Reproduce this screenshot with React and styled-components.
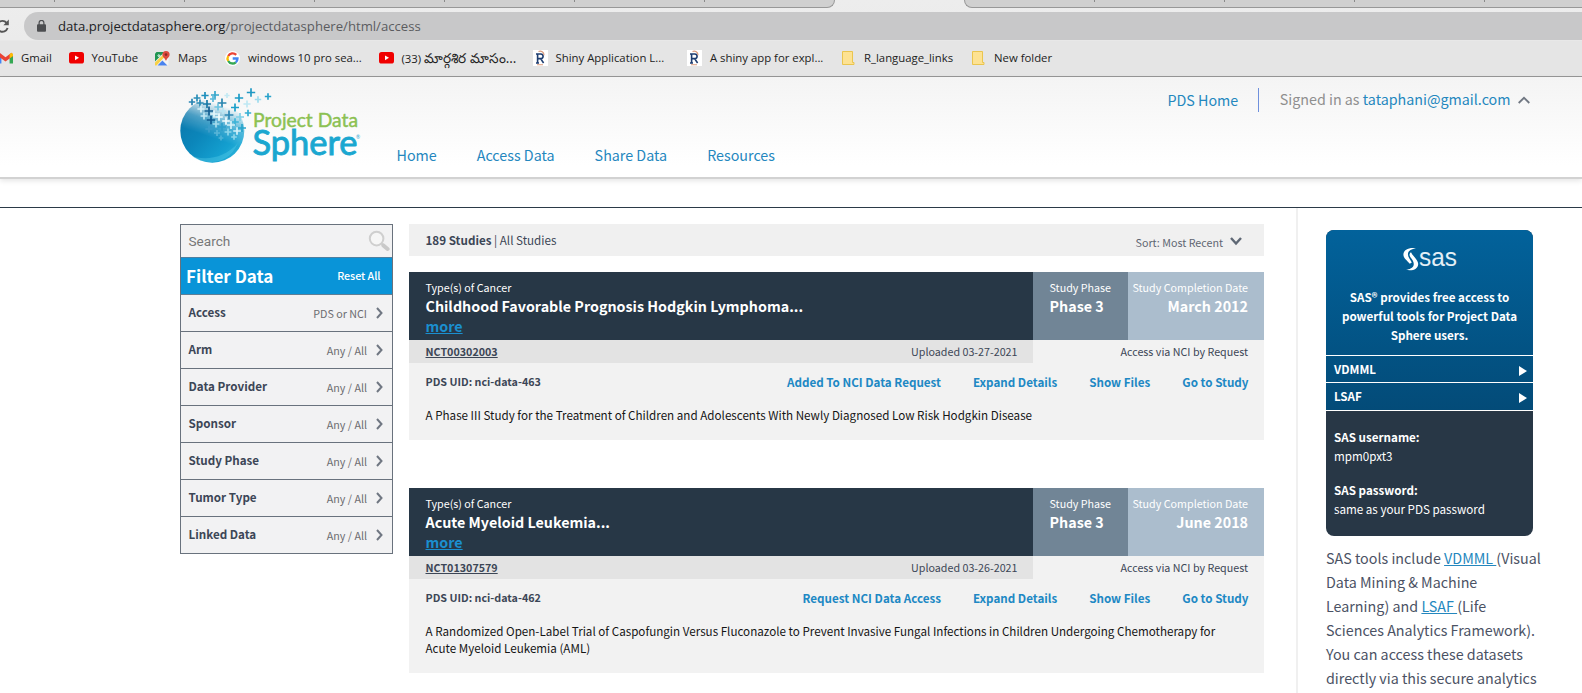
import React from 'react';
import styled, { createGlobalStyle } from 'styled-components';

const GlobalStyle = createGlobalStyle`
  *, *::before, *::after { box-sizing: border-box; }
  html, body { margin: 0; padding: 0; overflow: hidden; background: #fff; }
  a { color: inherit; text-decoration: none; }
  p { margin: 0; }
`;

const siteFont = '"Noto Sans CJK SC", "Noto Sans", sans-serif';
const chromeFont = '"Open Sans", "Noto Sans", sans-serif';

/* type scale: small, body, large, heading */
const size = { s: '10.72px', m: '11.63px', l: '14.3px', xl: '17.07px' };

const Window = styled.div`
  width: 100vw;
  height: 693px;
  overflow: hidden;
  display: flex;
  flex-direction: column;
  font-family: ${siteFont};
  font-size: ${size.m};
  line-height: 16px;
  color: #3c4656;
`;

/* ---------- browser chrome ---------- */
const Browser = styled.div`
  flex: none;
  height: 77px;
  display: flex;
  flex-direction: column;
  font-family: ${chromeFont};
  background: linear-gradient(#ededed 0, #ebebeb 40px, #e5e5e5 41px, #e5e5e5 100%);
  border-bottom: 1px solid #979797;
`;

const TabStrip = styled.div`
  display: flex;
  justify-content: space-between;
  height: 8px;
`;

const TabGroup = styled.div`
  display: flex;
  width: ${p => p.$width}px;
  padding-left: ${p => p.$inset}px;
  background: #d0d0d0;
  border-bottom: 1px solid #989898;
  border-radius: ${p => (p.$end ? '0 0 0 8px' : '0 0 8px 0')};
  ${p => (p.$end ? 'border-left: 1px solid #989898;' : 'border-right: 1px solid #989898;')}
`;

const TabMark = styled.div`
  flex: none;
  width: ${p => p.$width}px;
  height: 2px;
  border-left: 1px solid #8a8a8a;
`;

const AddressRow = styled.div`
  display: flex;
  height: 32px;
  padding-top: 4px;
`;

const ReloadSlot = styled.div`
  width: 24px;
  padding-top: 6px;
`;

const Address = styled.div`
  flex: 1;
  display: flex;
  align-items: center;
  height: 28px;
  padding-left: 13px;
  border-radius: 14px 0 0 14px;
  background: #c8c8c9;
  font-size: 13.15px;
  line-height: 28px;
  color: #5b5c5f;
`;

const Host = styled.span`
  margin-left: 12px;
  color: #202124;
`;

const Bookmarks = styled.div`
  flex: 1;
  display: flex;
  align-items: center;
  margin-left: -2px;
`;

const Bookmark = styled.a`
  flex: 0 0 ${p => p.$width}px;
  display: flex;
  align-items: center;
  gap: 8px;
  font-size: 11.35px;
  line-height: 16px;
  white-space: nowrap;
  color: #222;
`;

const Telugu = styled.span`
  font-size: 13.6px;
`;

/* ---------- site header ---------- */
const Header = styled.header`
  position: relative;
  flex: none;
  display: flex;
  align-items: flex-start;
  height: 102px;
  padding-left: 180px;
  background: linear-gradient(#f4f4f4, #fff 88%);
  border-bottom: 2px solid #d2d2d2;
  box-shadow: 0 2px 5px rgba(0, 0, 0, 0.1);
`;

const Nav = styled.nav`
  display: flex;
  gap: 40px;
  margin: 68px 0 0 35.5px;
  font-size: ${size.l};
  line-height: 20px;
  color: #2487be;
`;

const Account = styled.div`
  display: flex;
  align-items: center;
  margin: 11px 52px 0 auto;
  height: 24px;
  font-size: ${size.l};
  line-height: 20px;
  color: #2487be;
`;

const HomeLink = styled.a`
  height: 24px;
  padding-right: 20px;
  line-height: 23px;
  border-right: 1px solid #6f90dd;
`;

const SignedIn = styled.span`
  margin: 0 7.5px 0 20.5px;
  padding-bottom: 3px;
  color: #8f8f8f;
`;

const Mail = styled.a`
  color: #2487be;
`;

const SubBar = styled.div`
  flex: none;
  height: 29px;
  border-bottom: 1px solid #2b3a47;
`;

/* ---------- body ---------- */
const Body = styled.main`
  flex: 1;
  display: flex;
  min-height: 0;
  padding-left: 180px;
`;

const Filters = styled.aside`
  align-self: flex-start;
  width: 213px;
  margin: 16px 16px 0 0;
  border: 1px solid #69727d;
  background: #f2f2f3;
`;

const SearchBox = styled.div`
  display: flex;
  justify-content: space-between;
  height: 32px;
  padding: 5px 2px 0 7.5px;
  font: 13.6px/22px Roboto, sans-serif;
  color: #777;
`;

const FilterHead = styled.div`
  display: flex;
  align-items: center;
  justify-content: space-between;
  height: 38px;
  padding: 0 11.5px 2px 5px;
  background: #0994d8;
  border-top: 1px solid #4f7fa0;
  border-bottom: 1px solid #5f7f96;
  color: #fff;
`;

const FilterTitle = styled.h2`
  margin: 0;
  font-size: ${size.xl};
  line-height: 25px;
`;

const Reset = styled.a`
  font-size: ${size.s};
  font-weight: 500;
  line-height: 15px;
  letter-spacing: -0.05px;
`;

const FilterRow = styled.div`
  display: flex;
  align-items: center;
  height: 37px;
  padding: 0 9px 0 7.5px;
  border-bottom: 1px solid #69727d;
  &:last-child { height: 36px; border-bottom: 0; }
`;

const FilterName = styled.b`
  flex: 1;
  padding-bottom: 3px;
`;

const FilterValue = styled.span`
  margin-right: 9px;
  padding-top: 1px;
  font-size: ${size.s};
  color: #6c6c70;
`;

const Results = styled.section`
  width: 855px;
  padding-top: 16px;
`;

const Summary = styled.div`
  display: flex;
  justify-content: space-between;
  height: 32px;
  margin-bottom: 16px;
  padding: 8px 22px 0 16.5px;
  background: #f0f0f0;
`;

const Sort = styled.span`
  display: flex;
  gap: 7px;
  padding-top: 3px;
  font-size: ${size.s};
  line-height: 15px;
  color: #5f6672;
`;

const Card = styled.article`
  margin-bottom: 48px;
  background: #f2f2f2;
`;

const CardHead = styled.div`
  display: grid;
  grid-template-columns: 624px 95px 136px;
  height: 68px;
  color: #fff;
`;

const HeadCell = styled.div`
  padding: 8px 16px 0 ${p => (p.$right ? 4 : 16.5)}px;
  background: ${p => p.$bg};
  text-align: ${p => (p.$right ? 'right' : 'left')};
  white-space: nowrap;
`;

const Label = styled.div`
  margin-bottom: 1px;
  font-size: ${size.s};
  line-height: 15px;
`;

const Value = styled.div`
  font-size: ${size.l};
  font-weight: 700;
  line-height: 20px;
`;

const More = styled.a`
  color: #1b8fcf;
  text-decoration: underline;
`;

const MetaRow = styled.div`
  display: grid;
  grid-template-columns: 624px 1fr;
  height: 23px;
  font-size: ${size.s};
  line-height: 15px;
`;

const MetaLeft = styled.div`
  display: flex;
  justify-content: space-between;
  padding: 4px 15.5px 0 16.5px;
  background: #e3e3e3;
`;

const MetaRight = styled.div`
  padding: 4px 16px 0;
  text-align: right;
`;

const Trial = styled.a`
  font-weight: 700;
  text-decoration: underline;
`;

const ActionRow = styled.div`
  display: flex;
  gap: 32px;
  padding: 11px 15.5px 0 16.5px;
  font-weight: 700;
  color: #2088c4;
`;

const Uid = styled.span`
  flex: 1;
  font-size: ${size.s};
  color: #3c4656;
`;

const Description = styled.p`
  padding: 17px 40px 16px 16.5px;
  line-height: 17px;
  color: #151515;
`;

const Side = styled.aside`
  flex: 1;
  margin-left: 32px;
  padding: 22px 34px 0 28px;
  border-left: 2px solid #f0f0f0;
`;

const SasPanel = styled.div`
  width: 207px;
  height: 306px;
  overflow: hidden;
  border-radius: 8px;
  background: #283746;
  color: #fff;
`;

const SasTop = styled.div`
  height: 181px;
  background: linear-gradient(#02629b, #034b78);
  font-weight: 700;
`;

const SasIntro = styled.div`
  display: flex;
  flex-direction: column;
  align-items: center;
  height: 125px;
  padding-top: 10px;
`;

const SasText = styled.p`
  margin-top: 11px;
  padding: 0 10px;
  text-align: center;
  line-height: 19px;
`;

const SasLink = styled.a`
  display: flex;
  justify-content: space-between;
  align-items: center;
  height: ${p => p.$height}px;
  padding: 0 6px 0 8px;
  border-top: 1px solid #fff;
  ${p => p.$last && 'padding-bottom: 1px; border-bottom: 1px solid #fff;'}
`;

const Credentials = styled.dl`
  margin: 0;
  padding: 17px 8px 0;
  line-height: 19px;
`;

const Term = styled.dt`
  font-weight: 700;
`;

const Detail = styled.dd`
  margin: 0 0 15px;
`;

const SideText = styled.p`
  width: 220px;
  margin-top: 10px;
  font-size: ${size.l};
  line-height: 24px;
  color: #4b5264;
  white-space: nowrap;
`;

const TextLink = styled.a`
  color: #2487be;
  text-decoration: underline;
  white-space: pre;
`;

/* ---------- drawings ---------- */
const Icon = styled.svg`
  flex: none;
  display: block;
`;

const LogoSlot = styled.a`
  margin-top: 9px;
`;

const ArrowSlot = styled.span`
  padding-top: 3px;
`;

const Reload = () => (
  <Icon width="12" height="16" viewBox="0 0 12 16">
    <path d="M6.6 4.8A5.4 5.4 0 1 0 7.6 10" fill="none" stroke="#555" strokeWidth="1.9" />
    <path d="M8.8 1.6v5.6H3.4z" fill="#555" />
  </Icon>
);

const Lock = () => (
  <Icon width="9" height="12" viewBox="0 0 9 12">
    <rect x="0" y="4.2" width="9" height="7.6" rx="1" fill="#4c4d50" />
    <path d="M2.1 5V2.8a2.4 2.4 0 0 1 4.8 0V5" fill="none" stroke="#4c4d50" strokeWidth="1.2" />
  </Icon>
);

const GmailIcon = () => (
  <Icon width="15" height="12" viewBox="0 0 15 12">
    <path d="M0 2v9.5h3.4V5z" fill="#4285f4" />
    <path d="M15 2v9.5h-3.4V5z" fill="#34a853" />
    <path d="M0 2.5 1.5.7 7.5 5.3 13.5.7 15 2.5v1.4L7.5 9.5 0 3.9z" fill="#ea4335" />
    <path d="M11.6 2.2 13.4.7 15 2v2l-3.4 2.5z" fill="#fbbc04" />
  </Icon>
);

const YouTubeIcon = () => (
  <Icon width="15" height="12" viewBox="0 0 15 12">
    <rect width="15" height="11.6" rx="2.6" fill="#f00000" />
    <path d="M6 3.4v4.8l4-2.4z" fill="#fff" />
  </Icon>
);

const MapsIcon = () => (
  <Icon width="15" height="15" viewBox="0 0 15 15">
    <rect x="0" y="1" width="13.5" height="13.5" rx="1.5" fill="#f3f3f3" />
    <path d="M0 2.5 1.5 1h8L0 10.5z" fill="#219653" />
    <path d="M0 11.500 9.400 2.500l1.800 1.800L1.500 14.500H0z" fill="#f7d046" />
    <path d="M2.500 14.500 7.400 9.400l5 5.100z" fill="#4a83ee" />
    <path d="M11 0a3.6 3.6 0 0 1 3.6 3.7c0 2.4-2.6 3.3-3.6 6.3-1-3-3.6-3.9-3.6-6.3A3.6 3.6 0 0 1 11 0z" fill="#dd4b3e" />
    <circle cx="11" cy="3.6" r="1.3" fill="#8c2b22" />
    <path d="M5.500 4.400H3.800v.9h.8a1 1 0 1 1-.2-1.500" fill="none" stroke="#fff" strokeWidth=".7" />
  </Icon>
);

const GoogleIcon = () => (
  <Icon width="15" height="15" viewBox="0 0 15 15">
    <circle cx="7.5" cy="7.5" r="7.5" fill="#fff" />
    <g fill="none" strokeWidth="2.3">
      <path d="M11.2 3.9A5 5 0 0 0 3.2 5" stroke="#ea4335" />
      <path d="M3.2 5a5 5 0 0 0 0 5" stroke="#fbbc05" />
      <path d="M3.2 10a5 5 0 0 0 7.6 1.3" stroke="#34a853" />
      <path d="M10.8 11.3A5 5 0 0 0 12.5 7.5H7.7" stroke="#4285f4" />
    </g>
  </Icon>
);

const RIcon = () => (
  <Icon width="15" height="16" viewBox="0 0 15 16">
    <rect width="15" height="16" fill="#fff" />
    <path d="M4.6 13V4h3.2a2.3 2.3 0 0 1 0 4.6H4.6M7.6 8.6 10.6 13M3 13h3M3 4h2" fill="none" stroke="#1d3d70" strokeWidth="1.6" />
    <path d="M5.5 1.6A3.8 3.8 0 0 1 11 5.2M4 14.8h6" fill="none" stroke="#d99a7c" strokeWidth="1.1" />
  </Icon>
);

const FolderIcon = () => (
  <Icon width="15" height="14" viewBox="0 0 15 14">
    <path d="M1.5.5h10v11h1.5v2H1.5z" fill="#fde293" stroke="#eac54f" />
  </Icon>
);

const Chevron = ({ d, w, h, color = '#707782', stroke = 2 }) => (
  <Icon width={w} height={h} viewBox={`0 0 ${w} ${h}`}>
    <path d={d} fill="none" stroke={color} strokeWidth={stroke} />
  </Icon>
);

const Magnifier = () => (
  <Icon width="22" height="22" viewBox="0 0 22 22">
    <circle cx="8.6" cy="8.6" r="6.8" fill="#f6f6f6" stroke="#cfcfcf" strokeWidth="2" />
    <path d="m13.4 13.4 2 2" stroke="#cfcfcf" strokeWidth="2" />
    <path d="m15.4 15.4 4.2 3.6" stroke="#c9c9c9" strokeWidth="4" strokeLinecap="round" />
  </Icon>
);

const PlayMark = () => (
  <ArrowSlot>
    <Icon width="8" height="10" viewBox="0 0 8 10">
      <path d="M0 0v10l8-5z" fill="#fff" />
    </Icon>
  </ArrowSlot>
);

/* [x, y, colour, arm length] */
const pluses = [
  [17, 11, '#2b8fb8', 3.4], [25, 8.5, '#1f8fbd', 3.6], [35, 8, '#35a6cc', 4], [12, 15, '#2b86b4', 3.2],
  [27, 17, '#1879a6', 4], [20, 16, '#2d8cb5', 3.6], [42, 16, '#2b86b0', 4.4], [33, 12, '#5bb9da', 3],
  [59, 11, '#1d9cc6', 4.2], [71, 5.5, '#2099c4', 4.2], [88, 9.5, '#2aa3cb', 3.2], [78, 12.5, '#9fdcee', 3.2],
  [47, 8.5, '#c4e9f3', 2.6], [67, 17, '#bfe8f3', 3.6], [55, 20.5, '#1ba0ca', 4], [68, 26, '#35afd3', 3.2],
  [49, 28, '#2c87b4', 4.4], [38, 20, '#6cc3e0', 3.6], [43, 24, '#b9e5f2', 3], [60, 30, '#7fd0e8', 4],
  [21, 22, '#d9f2f8', 3.6], [29, 24, '#145f92', 4.4], [34, 27, '#e5f6fb', 3.8], [24, 29, '#bfe6f3', 3.4],
  [39, 30, '#f1fbfd', 3.8], [31, 33, '#0f5b90', 4.2], [46, 34, '#f1fbfd', 3.8], [55, 35, '#3db4d8', 3.8],
  [51, 38, '#d4f1f8', 4], [36, 37, '#a6dced', 3.4], [42, 40, '#2d9fcb', 4], [62, 41, '#2aa5cc', 4],
  [29, 42, '#3d9dca', 3.6], [57, 44, '#d4f1f8', 3.8], [48, 45, '#8bd5ea', 3.4], [37, 46, '#58b5d8', 3],
  [54, 50, '#8bd5ea', 2.8], [41, 51, '#4db2d6', 2.4],
];

const Logo = () => (
  <Icon width="181" height="86" viewBox="0 0 181 86" role="img" aria-label="Project Data Sphere">
    <defs>
      <linearGradient id="ball" x1="0" y1="0" x2="1" y2="0.9">
        <stop offset="0" stopColor="#0a72a6" />
        <stop offset="0.45" stopColor="#0b86ba" />
        <stop offset="0.78" stopColor="#14a0d0" />
        <stop offset="1" stopColor="#35b9de" />
      </linearGradient>
      <linearGradient id="fade" gradientUnits="userSpaceOnUse" x1="36" y1="52" x2="47" y2="20">
        <stop offset="0" stopColor="#fff" />
        <stop offset="0.45" stopColor="#bbb" />
        <stop offset="1" stopColor="#000" />
      </linearGradient>
      <mask id="dissolve">
        <rect width="80" height="86" fill="url(#fade)" />
      </mask>
    </defs>
    <g transform="translate(0 1)">
      <circle cx="32.3" cy="43.8" r="32" fill="url(#ball)" mask="url(#dissolve)" />
      <path d="M12 69c14 5 33 2 46-13-6 14-17 19-27 19-8 0-14-2-19-6z" fill="#5fd0ec" opacity="0.35" />
      {pluses.map(([x, y, c, r], i) => (
        <path key={i} d={`M${x - r} ${y}h${2 * r}M${x} ${y - r}v${2 * r}`} stroke={c} strokeWidth="1.7" />
      ))}
      <g fontFamily="Lato, sans-serif">
        <text x="73" y="39.9" fontSize="19.6" fill="#8cc152" stroke="#8cc152" strokeWidth="0.45" textLength="105" lengthAdjust="spacingAndGlyphs">Project Data</text>
        <text x="72.5" y="67.8" fontSize="34" fill="#1ba7d0" stroke="#1ba7d0" strokeWidth="0.9" textLength="105" lengthAdjust="spacingAndGlyphs">Sphere</text>
        <text x="176" y="52" fontSize="5" fill="#1ba7d0">®</text>
      </g>
    </g>
  </Icon>
);

const SasLogo = () => (
  <Icon width="64" height="37" viewBox="-4 -7 64 37" role="img" aria-label="sas">
    <path d="M14 1.200C7 .2 1.6 2.600 1.400 7.400c0 4 4.200 6.200 6.400 9.400l2-1.400C7.600 12 5.600 9.600 6 6.600 6.400 3.600 9.800 1.800 14 1.200z" fill="#fff" />
    <path d="M9 5.200c-2.200 1.600-1.600 3.600 0 5.800 2 2.800 3.200 4.600 2.600 7.200-.6 2.600-3.800 4.200-8 4.600 7 1.600 12.400-.8 12.600-5.600.2-4-5-7.400-7.200-12z" fill="#fff" />
    <text x="17" y="18.800" fontFamily="Liberation Sans, sans-serif" fontSize="26" fontWeight="400" fill="#e4eff6" textLength="38" lengthAdjust="spacingAndGlyphs">sas</text>
  </Icon>
);

/* ---------- data ---------- */
const bookmarks = [
  { icon: GmailIcon, text: 'Gmail', width: 70.5 },
  { icon: YouTubeIcon, text: 'YouTube', width: 86.5 },
  { icon: MapsIcon, text: 'Maps', width: 70 },
  { icon: GoogleIcon, text: 'windows 10 pro sea...', width: 153.5 },
  { icon: YouTubeIcon, text: <span>(33) <Telugu>మార్గశిర మాసం...</Telugu></span>, width: 154 },
  { icon: RIcon, text: 'Shiny Application L...', width: 154.5 },
  { icon: RIcon, text: 'A shiny app for expl...', width: 154 },
  { icon: FolderIcon, text: 'R_language_links', width: 130 },
  { icon: FolderIcon, text: 'New folder', width: 90 },
];

const filters = [
  ['Access', 'PDS or NCI'], ['Arm', 'Any / All'], ['Data Provider', 'Any / All'], ['Sponsor', 'Any / All'],
  ['Study Phase', 'Any / All'], ['Tumor Type', 'Any / All'], ['Linked Data', 'Any / All'],
];

const studies = [
  {
    cancer: 'Childhood Favorable Prognosis Hodgkin Lymphoma...', phase: 'Phase 3', date: 'March 2012',
    trial: 'NCT00302003', uploaded: '03-27-2021', uid: 'nci-data-463', action: 'Added To NCI Data Request',
    text: 'A Phase III Study for the Treatment of Children and Adolescents With Newly Diagnosed Low Risk Hodgkin Disease',
  },
  {
    cancer: 'Acute Myeloid Leukemia...', phase: 'Phase 3', date: 'June 2018',
    trial: 'NCT01307579', uploaded: '03-26-2021', uid: 'nci-data-462', action: 'Request NCI Data Access',
    text: 'A Randomized Open-Label Trial of Caspofungin Versus Fluconazole to Prevent Invasive Fungal Infections in Children Undergoing Chemotherapy for Acute Myeloid Leukemia (AML)',
  },
];

const Study = ({ study }) => (
  <Card>
    <CardHead>
      <HeadCell $bg="#273746">
        <Label>Type(s) of Cancer</Label>
        <Value>{study.cancer}</Value>
        <Value><More>more</More></Value>
      </HeadCell>
      <HeadCell $bg="#718596">
        <Label>Study Phase</Label>
        <Value>{study.phase}</Value>
      </HeadCell>
      <HeadCell $bg="#abbdcd" $right>
        <Label>Study Completion Date</Label>
        <Value>{study.date}</Value>
      </HeadCell>
    </CardHead>
    <MetaRow>
      <MetaLeft>
        <Trial>{study.trial}</Trial>
        <span>Uploaded {study.uploaded}</span>
      </MetaLeft>
      <MetaRight>Access via NCI by Request</MetaRight>
    </MetaRow>
    <ActionRow>
      <Uid>PDS UID: {study.uid}</Uid>
      <a>{study.action}</a>
      <a>Expand Details</a>
      <a>Show Files</a>
      <a>Go to Study</a>
    </ActionRow>
    <Description>{study.text}</Description>
  </Card>
);

export default function App() {
  return (
    <Window>
      <GlobalStyle />
      <Browser>
        <TabStrip>
          <TabGroup $width={835} $inset={54}>
            {[130, 130, 130, 130, 130, 100].map((w, i) => <TabMark key={i} $width={w} />)}
          </TabGroup>
          <TabGroup $width={618} $inset={129} $end>
            {[130, 130, 130, 90].map((w, i) => <TabMark key={i} $width={w} />)}
          </TabGroup>
        </TabStrip>
        <AddressRow>
          <ReloadSlot><Reload /></ReloadSlot>
          <Address>
            <Lock />
            <Host>data.projectdatasphere.org</Host>
            <span>/projectdatasphere/html/access</span>
          </Address>
        </AddressRow>
        <Bookmarks>
          {bookmarks.map(({ icon: Mark, text, width }, i) => (
            <Bookmark key={i} $width={width}><Mark />{text}</Bookmark>
          ))}
        </Bookmarks>
      </Browser>

      <Header>
        <LogoSlot><Logo /></LogoSlot>
        <Nav>
          <a>Home</a><a>Access Data</a><a>Share Data</a><a>Resources</a>
        </Nav>
        <Account>
          <HomeLink>PDS Home</HomeLink>
          <SignedIn>Signed in as <Mail>tataphani@gmail.com</Mail></SignedIn>
          <Chevron w={12} h={8} d="M.7 7 6 1.8l5.3 5.2" stroke={1.8} />
        </Account>
      </Header>
      <SubBar />

      <Body>
        <Filters>
          <SearchBox>Search<Magnifier /></SearchBox>
          <FilterHead>
            <FilterTitle>Filter Data</FilterTitle>
            <Reset>Reset All</Reset>
          </FilterHead>
          {filters.map(([name, value]) => (
            <FilterRow key={name}>
              <FilterName>{name}</FilterName>
              <FilterValue>{value}</FilterValue>
              <Chevron w={7} h={12} d="M1 1l4.5 5L1 11" />
            </FilterRow>
          ))}
        </Filters>

        <Results>
          <Summary>
            <span><b>189 Studies</b> | All Studies</span>
            <Sort>Sort: Most Recent<Chevron w={12} h={12} d="M1 3l5 5.5L11 3" stroke={2.4} color="#5f6875" /></Sort>
          </Summary>
          {studies.map(s => <Study key={s.trial} study={s} />)}
        </Results>

        <Side>
          <SasPanel>
            <SasTop>
              <SasIntro>
                <SasLogo />
                <SasText>SAS® provides free access to powerful tools for Project Data Sphere users.</SasText>
              </SasIntro>
              <SasLink $height={27}>VDMML<PlayMark /></SasLink>
              <SasLink $height={29} $last>LSAF<PlayMark /></SasLink>
            </SasTop>
            <Credentials>
              <Term>SAS username:</Term>
              <Detail>mpm0pxt3</Detail>
              <Term>SAS password:</Term>
              <Detail>same as your PDS password</Detail>
            </Credentials>
          </SasPanel>
          <SideText>
            SAS tools include <TextLink>{'VDMML '}</TextLink>(Visual<br />
            Data Mining &amp; Machine<br />
            Learning) and <TextLink>{'LSAF '}</TextLink>(Life<br />
            Sciences Analytics Framework).<br />
            You can access these datasets<br />
            directly via this secure analytics
          </SideText>
        </Side>
      </Body>
    </Window>
  );
}
